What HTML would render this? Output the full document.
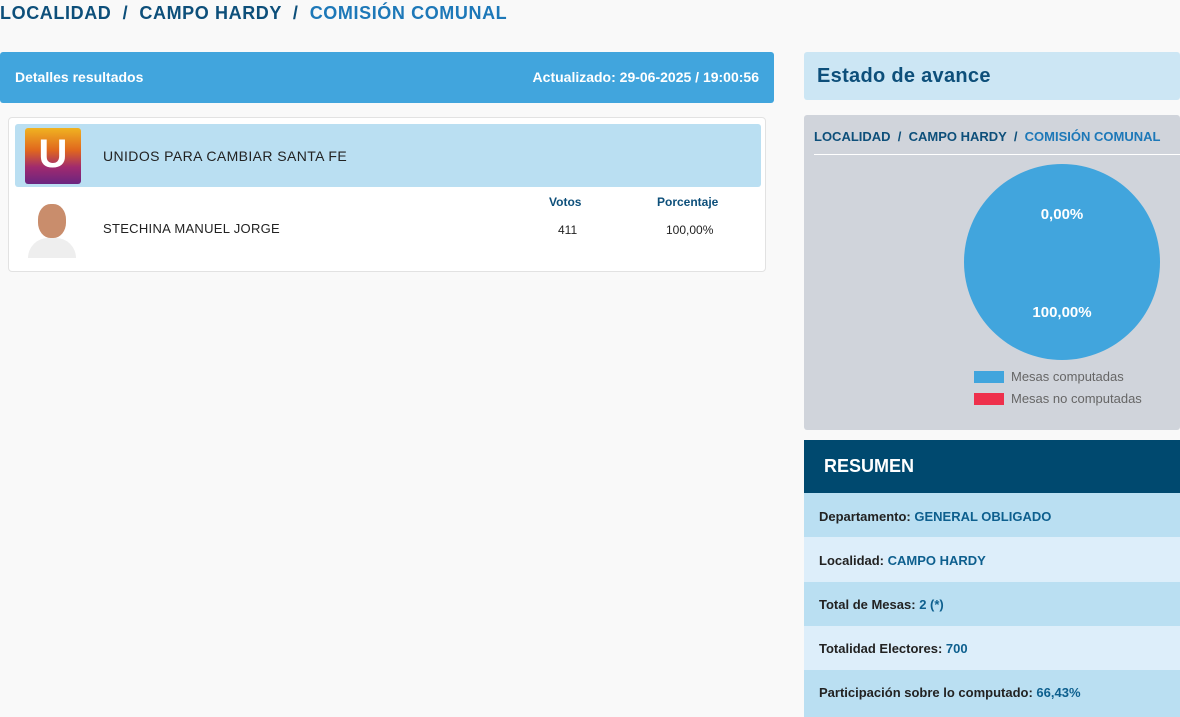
<!DOCTYPE html>
<html><head><meta charset="utf-8"><style>
*{margin:0;padding:0;box-sizing:border-box}
body{width:1180px;height:717px;overflow:hidden;background:#f9f9f9;font-family:"Liberation Sans",sans-serif;position:relative}
.bc{position:absolute;left:0;top:3px;font-size:18px;font-weight:bold;color:#0d4f7a;white-space:nowrap;letter-spacing:0.6px}
.bc span{color:#1d78b8}
.hdr{position:absolute;left:0;top:52px;width:774px;height:51px;background:#41a5dd;border-radius:3px;color:#fff;font-size:14px;font-weight:bold}
.card{position:absolute;left:8px;top:117px;width:758px;height:155px;background:#fff;border:1px solid #e2e2e2;border-radius:4px}
.party{position:absolute;left:6px;top:6px;width:746px;height:63px;background:#badff2;border-radius:3px}
.logo{position:absolute;left:10px;top:4px;width:56px;height:56px;border-radius:3px;background:linear-gradient(#f0b321,#e0661e 40%,#a02a6e 70%,#6a2580);color:#fff;font-size:40px;font-weight:bold;text-align:center;line-height:52px}
.t{position:absolute;font-size:13px;color:#222;white-space:nowrap}
.right{position:absolute;left:804px;width:376px}
</style></head><body>
<div class="bc">LOCALIDAD &nbsp;/&nbsp; CAMPO HARDY &nbsp;/&nbsp; <span>COMISIÓN COMUNAL</span></div>
<div class="hdr"><div style="position:absolute;left:15px;top:17px">Detalles resultados</div><div style="position:absolute;right:15px;top:17px">Actualizado: 29-06-2025 / 19:00:56</div></div>
<div class="card">
 <div class="party"><div class="logo">U</div><div class="t" style="left:88px;top:24px;font-size:14px;letter-spacing:0.4px">UNIDOS PARA CAMBIAR SANTA FE</div></div>
 <div style="position:absolute;left:15px;top:84px;width:56px;height:56px;background:#fff"><div style="position:absolute;left:14px;top:2px;width:28px;height:34px;border-radius:45%;background:#c98d6c"></div><div style="position:absolute;left:4px;top:36px;width:48px;height:20px;border-radius:20px 20px 0 0;background:#eee"></div></div>
 <div class="t" style="left:94px;top:103px;letter-spacing:0.3px">STECHINA MANUEL JORGE</div>
 <div class="t" style="left:540px;top:77px;font-size:12px;font-weight:bold;color:#0d4f7a">Votos</div>
 <div class="t" style="left:648px;top:77px;font-size:12px;font-weight:bold;color:#0d4f7a">Porcentaje</div>
 <div class="t" style="left:549px;top:105px;font-size:12px">411</div>
 <div class="t" style="left:657px;top:105px;font-size:12px">100,00%</div>
</div>
<div class="right" style="top:52px;height:48px;background:#cce6f4;border-radius:3px"><div style="position:absolute;left:13px;top:13px;font-size:20px;font-weight:bold;color:#0d4f7a;letter-spacing:0.3px">Estado de avance</div></div>
<div class="right" style="top:115px;height:315px;background:#d0d4db;border-radius:3px">
 <div style="position:absolute;left:10px;top:14px;font-size:13px;font-weight:bold;color:#0d4f7a;white-space:nowrap">LOCALIDAD &nbsp;/&nbsp; CAMPO HARDY &nbsp;/&nbsp; <span style="color:#1d78b8">COMISIÓN COMUNAL</span></div>
 <div style="position:absolute;left:10px;top:39px;width:366px;height:1px;background:#fff"></div>
 <div style="position:absolute;left:160px;top:49px;width:196px;height:196px;border-radius:50%;background:#41a5dd"></div>
 <div style="position:absolute;left:160px;top:91px;width:196px;text-align:center;color:#fff;font-weight:bold;font-size:15px">0,00%</div>
 <div style="position:absolute;left:160px;top:189px;width:196px;text-align:center;color:#fff;font-weight:bold;font-size:15px">100,00%</div>
 <div style="position:absolute;left:170px;top:256px;width:30px;height:12px;background:#41a5dd"></div>
 <div style="position:absolute;left:207px;top:254px;font-size:13px;color:#666">Mesas computadas</div>
 <div style="position:absolute;left:170px;top:278px;width:30px;height:12px;background:#ee304c"></div>
 <div style="position:absolute;left:207px;top:276px;font-size:13px;color:#666">Mesas no computadas</div>
</div>
<div class="right" style="top:440px;height:53px;background:#00496f"><div style="position:absolute;left:20px;top:16px;color:#fff;font-size:18px;font-weight:bold">RESUMEN</div></div>
<div class="right" style="top:493px;height:44px;background:#badff2"><div class="t" style="left:15px;top:16px;font-weight:bold">Departamento: <span style="color:#0d5f8e">GENERAL OBLIGADO</span></div></div>
<div class="right" style="top:537px;height:45px;background:#ddeefa"><div class="t" style="left:15px;top:16px;font-weight:bold">Localidad: <span style="color:#0d5f8e">CAMPO HARDY</span></div></div>
<div class="right" style="top:582px;height:44px;background:#badff2"><div class="t" style="left:15px;top:15px;font-weight:bold">Total de Mesas: <span style="color:#0d5f8e">2 (*)</span></div></div>
<div class="right" style="top:626px;height:44px;background:#ddeefa"><div class="t" style="left:15px;top:15px;font-weight:bold">Totalidad Electores: <span style="color:#0d5f8e">700</span></div></div>
<div class="right" style="top:670px;height:47px;background:#badff2"><div class="t" style="left:15px;top:15px;font-weight:bold">Participación sobre lo computado: <span style="color:#0d5f8e">66,43%</span></div></div>
</body></html>
